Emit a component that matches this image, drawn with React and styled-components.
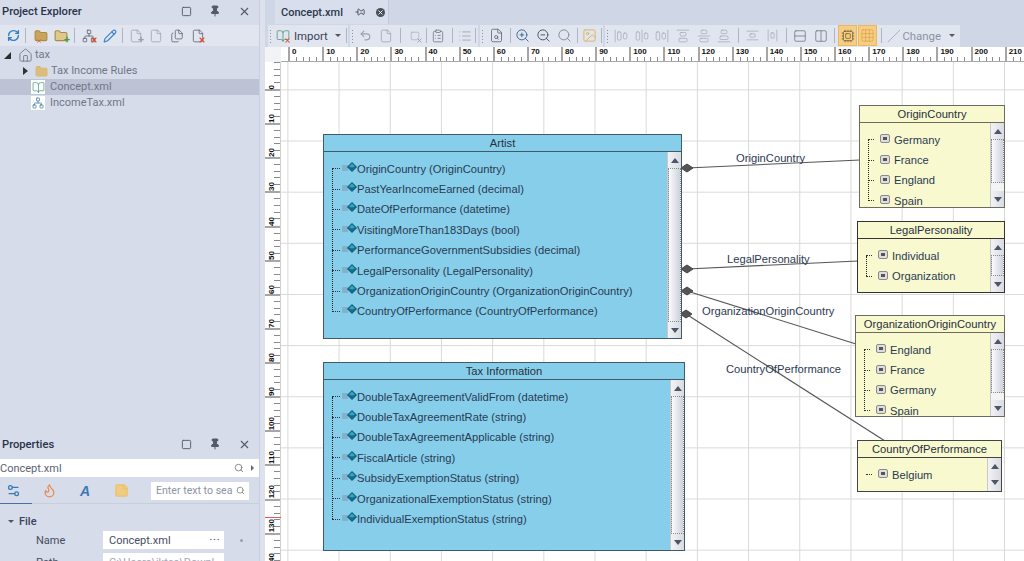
import React from "react";
import styled, { createGlobalStyle } from "styled-components";
import {
  RefreshCw, Folder, Network, Pencil, File, Files, Home, BookOpen,
  Undo2, Search, ZoomIn, ZoomOut, Image, List, Square, Pin, X, Settings2, Flame, StickyNote,
  AlignHorizontalJustifyStart, AlignHorizontalJustifyCenter, AlignHorizontalJustifyEnd,
  AlignVerticalJustifyStart, AlignVerticalJustifyCenter, AlignVerticalJustifyEnd,
  AlignVerticalSpaceAround, AlignHorizontalSpaceAround, Rows2, Columns2, Grid3x3, FileSearch,
  ClipboardList, Slash, Cpu,
} from "lucide-react";

const GlobalStyle = createGlobalStyle`
  html, body { margin: 0; height: 100%; overflow: hidden; }
  body { font-family: Roboto, "Noto Sans", sans-serif; background: #d6dce9; }
  #root { height: 100%; }
`;

const Shell = styled.div`
  display: grid;
  grid-template-columns: 259px 6px 1fr;
  grid-template-rows: minmax(0, 1fr);
  height: 561px;
  overflow: hidden;
`;

const Side = styled.div`
  display: flex;
  flex-direction: column;
  background: #d6dce9;
  min-width: 0;
  min-height: 0;
`;

const Splitter = styled.div`
  background: #dde2ed;
  border-left: 1px solid #c9cfdf;
`;

const Panel = styled.section`
  display: flex;
  flex-direction: column;
  flex: ${(p) => (p.$grow ? 1 : "none")};
  height: ${(p) => (p.$grow ? "auto" : "129px")};
  min-height: 0;
  overflow: hidden;
`;

const PanelHead = styled.div`
  display: flex;
  align-items: center;
  height: ${(p) => p.$h}px;
  box-sizing: border-box;
  flex: none;
  padding: 0 7px 3px 2px;
  gap: 13px;
  color: #28324a;
  font-size: 11.2px;
  font-weight: 500;
`;

const PanelTitle = styled.div`
  flex: 1;
`;

const HeadButton = styled.span`
  display: flex;
  width: 16px;
  justify-content: center;
  color: #55596a;
`;

const SideToolbar = styled.div`
  display: flex;
  align-items: center;
  height: 21px;
  flex: none;
  padding-left: 6px;
  background: #e1e5ef;
`;

const Tool = styled.span`
  position: relative;
  display: flex;
  align-items: center;
  justify-content: center;
  flex: none;
  width: ${(p) => p.$w || 20}px;
  height: 20px;
  color: ${(p) => p.$color || "#9aa0ad"};
`;

const ToolBadge = styled.span`
  position: absolute;
  right: ${(p) => p.$r ?? 1}px;
  bottom: 2px;
  display: flex;
  color: ${(p) => p.$color};
`;

const Sep = styled.span`
  flex: none;
  width: 1px;
  height: 15px;
  margin: 0 ${(p) => p.$m ?? 3}px;
  background: #aeb4c2;
`;

const Tree = styled.div`
  display: flex;
  flex-direction: column;
  padding-top: 1px;
`;

const TreeRow = styled.div`
  display: flex;
  align-items: center;
  height: 16px;
  box-sizing: border-box;
  gap: 3px;
  padding-left: ${(p) => p.$indent}px;
  background: ${(p) => (p.$selected ? "#bdc3d5" : "transparent")};
  color: #70778a;
  font-size: 11px;
`;

const TreeText = styled.span`
  margin-left: ${(p) => p.$l}px;
  margin-top: -2px;
`;

const Expander = styled.span`
  flex: none;
  width: 0;
  height: 0;
  margin-right: 4px;
  border-style: solid;
  border-width: ${(p) => (p.$open ? "0 0 7px 7px" : "4px 0 4px 5px")};
  border-color: ${(p) =>
    p.$open ? "transparent transparent #2d2d2d transparent" : "transparent transparent transparent #333"};
`;

const FileBadge = styled.span`
  display: flex;
  align-items: center;
  justify-content: center;
  width: 14px;
  height: 14px;
  margin-right: 2px;
  background: #fff;
  color: ${(p) => p.$color};
`;

const PathBar = styled.div`
  display: flex;
  align-items: center;
  flex: none;
  height: 18px;
  padding-right: 5px;
  background: #fff;
  color: #5b6274;
  font-size: 11px;
  gap: 7px;
`;

const PathText = styled.span`
  flex: 1;
`;

const SmallCaret = styled.span`
  width: 0;
  height: 0;
  border-style: solid;
  border-width: 3px 0 3px 3px;
  border-color: transparent transparent transparent #666;
`;

const PropTabs = styled.div`
  display: flex;
  align-items: center;
  flex: none;
  height: 25px;
  margin-top: 1px;
  border-bottom: 1px solid #c8cedd;
  position: relative;
  padding-left: 4px;
  gap: 18px;

  &::after {
    content: "";
    position: absolute;
    left: 0;
    bottom: -1px;
    width: 32px;
    height: 1px;
    background: #4a6fa5;
  }
`;

const SearchBox = styled.div`
  display: flex;
  align-items: center;
  justify-content: space-between;
  width: 98px;
  height: 18px;
  box-sizing: border-box;
  margin-left: 3px;
  padding: 0 4px 0 5px;
  background: #fff;
  color: #8d93a3;
  font-size: 10.6px;
  white-space: nowrap;
`;

const Section = styled.div`
  display: flex;
  align-items: center;
  height: 18px;
  margin-top: 11px;
  padding-left: 8px;
  gap: 5px;
  color: #3a425a;
  font-size: 11px;
  font-weight: 500;
`;

const DownCaret = styled.span`
  width: 0;
  height: 0;
  border-style: solid;
  border-width: 3px 3px 0 3px;
  border-color: #555 transparent transparent transparent;
`;

const PropRow = styled.div`
  display: flex;
  align-items: center;
  height: 18px;
  margin-top: ${(p) => p.$mt}px;
  padding-left: 36px;
  color: #454c63;
  font-size: 11px;
`;

const PropName = styled.span`
  width: 67px;
  flex: none;
`;

const PropValue = styled.div`
  display: flex;
  align-items: center;
  justify-content: space-between;
  width: 121px;
  height: 18px;
  padding: 0 4px 0 6px;
  box-sizing: border-box;
  background: #fff;
  color: ${(p) => p.$color};
  white-space: nowrap;
  overflow: hidden;
`;

const Bullet = styled.span`
  width: 3px;
  height: 3px;
  margin-left: 16px;
  border-radius: 50%;
  background: #9aa0ad;
`;

const Doc = styled.div`
  display: flex;
  flex-direction: column;
  min-width: 0;
  min-height: 0;
  background: #cfd6e6;
`;

const TabStrip = styled.div`
  display: flex;
  flex: none;
  height: 24px;
  padding-left: 10px;
`;

const DocTab = styled.div`
  display: flex;
  align-items: center;
  width: 114px;
  box-sizing: border-box;
  padding-left: 6px;
  background: #d8deeb;
  border-right: 1px solid #c3cadb;
  color: #2d364d;
  font-size: 11px;
  font-weight: 500;
`;

const TabPin = styled.span`
  display: flex;
  margin-left: 12px;
  color: #3c4254;
`;

const TabClose = styled.span`
  display: flex;
  align-items: center;
  justify-content: center;
  width: 9px;
  height: 9px;
  margin-left: 11px;
  border-radius: 50%;
  background: #4b4f5c;
  color: #fff;
`;

const DocToolbar = styled.div`
  display: flex;
  align-items: center;
  flex: none;
  height: 23px;
  padding-left: 3px;
  gap: 2px;
`;

const Segment = styled.div`
  display: flex;
  align-items: center;
  height: 22px;
  background: #e1e5ef;
`;

const Grip = styled.span`
  flex: none;
  width: 6px;
  height: 14px;
  background: radial-gradient(circle, #8a90a0 0.8px, transparent 1px) 1px 0 / 3px 3px repeat-y;
`;

const ImportLabel = styled.span`
  color: #3a4258;
  font-size: 11.4px;
  margin-left: 2px;
`;

const ChangeLabel = styled.span`
  color: #8d93a3;
  font-size: 11.4px;
`;

const Caret = styled(DownCaret)`
  margin: 0 ${(p) => p.$m}px 0 ${(p) => p.$l}px;
`;

const ActiveTool = styled(Tool)`
  width: 19px;
  height: 21px;
  margin-right: 1px;
  background: #f6cd83;
  border: 1px solid #eab95e;
  box-sizing: border-box;
  color: ${(p) => p.$color};
`;

const Designer = styled.div`
  display: grid;
  flex: 1;
  min-height: 0;
  grid-template-columns: 16px minmax(0, 1fr);
  grid-template-rows: 15px minmax(0, 1fr);
  background: #fff;
`;

const Corner = styled.div`
  background: #f2f3f6;
`;

const TopRuler = styled.div`
  display: flex;
  overflow: hidden;
  padding-left: 7px;
  background: #fff;
  border-bottom: 1px solid #a9a9a9;
`;

const TopCell = styled.div`
  flex: none;
  width: 34.13px;
  box-sizing: border-box;
  padding-left: 2px;
  border-left: 2px solid #a6a6a6;
  color: #111;
  font: 700 8px/9px "Liberation Sans", sans-serif;
  background: repeating-linear-gradient(90deg, transparent 0 5.8px, #8a8a8a 5.8px 6.8px) left bottom / 100% 4px no-repeat;
`;

const LeftRuler = styled.div`
  display: flex;
  flex-direction: column;
  min-height: 0;
  overflow: hidden;
  background: #fff;
  border-right: 1px solid #cfcfcf;
`;

const LeftCell = styled.div`
  display: flex;
  align-items: flex-end;
  flex: none;
  height: ${(p) => p.$h}px;
  box-sizing: border-box;
  padding-left: 2px;
  border-bottom: 2px solid #a6a6a6;
  background: repeating-linear-gradient(0deg, transparent 0 5.8px, #8a8a8a 5.8px 6.8px) right bottom / 6px 100% no-repeat;
`;

const LeftLabel = styled.span`
  writing-mode: vertical-rl;
  transform: rotate(180deg);
  color: #111;
  font: 700 8px/9px "Liberation Sans", sans-serif;
`;

const Canvas = styled.div`
  position: relative;
  overflow: hidden;
  background-color: #fff;
  background-image:
    linear-gradient(90deg, #d9d9d9 1.4px, transparent 1.4px),
    linear-gradient(0deg, transparent calc(100% - 1.4px), #d9d9d9 calc(100% - 1.4px));
  background-size: 51.2px 51.15px;
  background-position: 6.4px 27.4px;
`;

const Wires = styled.svg`
  position: absolute;
  inset: 0;
`;

const WireLabel = styled.span`
  position: absolute;
  left: ${(p) => p.$x}px;
  top: ${(p) => p.$y}px;
  color: #2c3a52;
  font: 11.2px/14px "Liberation Sans", Arial, sans-serif;
  white-space: nowrap;
`;

const Node = styled.div`
  position: absolute;
  left: ${(p) => p.$x}px;
  top: ${(p) => p.$y}px;
  width: ${(p) => p.$w}px;
  height: ${(p) => p.$h}px;
  display: flex;
  flex-direction: column;
  box-sizing: border-box;
  overflow: hidden;
  border: 1.5px solid ${(p) => p.$edge};
  background: ${(p) => p.$fill};
  font: 11.2px/14px "Liberation Sans", Arial, sans-serif;
  color: #2a3a50;
`;

const NodeTitle = styled.div`
  flex: none;
  height: 16px;
  line-height: 16px;
  text-align: center;
  border-bottom: 1.5px solid ${(p) => p.$edge};
  color: #27303c;
  white-space: nowrap;
`;

const NodeBody = styled.div`
  display: flex;
  flex: 1;
  min-height: 0;
`;

const NodeList = styled.div`
  position: relative;
  flex: 1;
  min-width: 0;
  padding-top: 6.5px;
`;

const TreeLine = styled.span`
  position: absolute;
  left: ${(p) => p.$x}px;
  top: 17px;
  height: ${(p) => (p.$rows - 1) * 20.4}px;
  border-left: 1px dotted #222;
`;

const NodeRow = styled.div`
  display: flex;
  align-items: center;
  height: 20.4px;
  padding-left: ${(p) => p.$x}px;
  white-space: nowrap;
`;

const Stub = styled.span`
  flex: none;
  width: ${(p) => p.$w}px;
  border-top: 1px dotted #333;
`;

const ValueIcon = styled.span`
  display: flex;
  align-items: center;
  justify-content: center;
  flex: none;
  width: 10px;
  height: 9px;
  margin: -2px 4px 0 6px;
  box-sizing: border-box;
  border: 1px solid #8a8a8a;
  border-radius: 2px;
  background: #dedede;

  &::after {
    content: "";
    width: 4px;
    height: 3px;
    background: #555;
  }
`;

const Scroll = styled.div`
  display: flex;
  flex-direction: column;
  flex: none;
  width: 13px;
  background: #f4f4f4;
  border-left: 1px solid #c9c9c9;
`;

const ScrollButton = styled.div`
  display: flex;
  align-items: center;
  justify-content: center;
  flex: ${(p) => (p.$fill ? 1 : "none")};
  height: ${(p) => (p.$fill ? "auto" : "16px")};
  background: linear-gradient(90deg, #f3f3f5, #d9dbe2);
`;

const Arrow = styled.span`
  width: 0;
  height: 0;
  border-left: 4px solid transparent;
  border-right: 4px solid transparent;
  ${(p) => (p.$up ? "border-bottom: 5px solid #4d5666;" : "border-top: 5px solid #4d5666;")}
`;

const ScrollTrack = styled.div`
  flex: 1;
  min-height: 0;
`;

const ScrollThumb = styled.div`
  height: ${(p) => p.$h};
  box-sizing: border-box;
  border: 1px dotted #8a8a8a;
  background: linear-gradient(90deg, #fbfbfd, #cfd2dc);
`;

const Marker = styled.span`
  position: absolute;
  left: 265px;
  top: 517px;
  width: 16px;
  height: 1px;
  background: #e25b5b;
`;

const topMarks = Array.from({ length: 22 }, (_, i) => i * 10);
const leftMarks = Array.from({ length: 15 }, (_, i) => i * 10);

const artistRows = [
  "OriginCountry (OriginCountry)",
  "PastYearIncomeEarned (decimal)",
  "DateOfPerformance (datetime)",
  "VisitingMoreThan183Days (bool)",
  "PerformanceGovernmentSubsidies (decimal)",
  "LegalPersonality (LegalPersonality)",
  "OrganizationOriginCountry (OrganizationOriginCountry)",
  "CountryOfPerformance (CountryOfPerformance)",
];

const taxRows = [
  "DoubleTaxAgreementValidFrom (datetime)",
  "DoubleTaxAgreementRate (string)",
  "DoubleTaxAgreementApplicable (string)",
  "FiscalArticle (string)",
  "SubsidyExemptionStatus (string)",
  "OrganizationalExemptionStatus (string)",
  "IndividualExemptionStatus (string)",
];

const lookups = [
  { title: "OriginCountry", x: 578, y: 43, w: 146, h: 103, thumb: "44px", edge: "#6b6b60", rows: ["Germany", "France", "England", "Spain"], line: 8 },
  { title: "LegalPersonality", x: 576, y: 159, w: 148, h: 72, thumb: "100%", edge: "#333", rows: ["Individual", "Organization"], line: 8 },
  { title: "OrganizationOriginCountry", x: 574, y: 253, w: 150, h: 102, thumb: "44px", edge: "#6b6b60", rows: ["England", "France", "Germany", "Spain"], line: 8 },
  { title: "CountryOfPerformance", x: 576, y: 378, w: 145, h: 52, edge: "#444", rows: ["Belgium"], line: 8 },
];

const links = [
  { label: "OriginCountry", lx: 455, ly: 89, from: [406, 106], to: [579, 98] },
  { label: "LegalPersonality", lx: 446, ly: 190, from: [406, 207], to: [577, 199] },
  { label: "OrganizationOriginCountry", lx: 421, ly: 242, from: [406, 229], to: [575, 282] },
  { label: "CountryOfPerformance", lx: 445, ly: 300, from: [405, 252], to: [604, 379] },
];

function EntityIcon() {
  return (
    <svg width="15" height="11" viewBox="0 0 15 11" style={{ flex: "none", margin: "-3px 0 0 2px" }}>
      <path d="M0 4h6M0 6h6M0 8h6" stroke="#7d97a8" strokeWidth="1" />
      <path d="M10 0.5 14.5 5 10 9.5 5.5 5Z" fill="#0f6f93" stroke="#0e3f55" strokeWidth="0.8" />
      <path d="M10 1.5 13 4.6 10 5.4 7 4.6Z" fill="#2fa6c4" />
    </svg>
  );
}

function Scrollbar({ thumb }) {
  return (
    <Scroll>
      <ScrollButton $fill={!thumb}><Arrow $up /></ScrollButton>
      {thumb && (
        <ScrollTrack>
          <ScrollThumb $h={thumb} />
        </ScrollTrack>
      )}
      <ScrollButton $fill={!thumb}><Arrow /></ScrollButton>
    </Scroll>
  );
}

function Diamond({ at }) {
  const [x, y] = at;
  return <path d={`M${x - 6} ${y}L${x} ${y - 4}L${x + 6} ${y}L${x} ${y + 4}Z`} fill="#555" stroke="#444" />;
}

function EntityNode({ title, rows, x, y, w, h }) {
  return (
    <Node $x={x} $y={y} $w={w} $h={h} $edge="#3f5b6b" $fill="#87ceeb">
      <NodeTitle $edge="#3f5b6b">{title}</NodeTitle>
      <NodeBody>
        <NodeList>
          <TreeLine $x={8} $rows={rows.length} />
          {rows.map((r) => (
            <NodeRow key={r} $x={8}>
              <Stub $w={8} />
              <EntityIcon />
              {r}
            </NodeRow>
          ))}
        </NodeList>
        <Scrollbar thumb="100%" />
      </NodeBody>
    </Node>
  );
}

function LookupNode({ title, rows, x, y, w, h, thumb, edge, line }) {
  return (
    <Node $x={x} $y={y} $w={w} $h={h} $edge={edge} $fill="#f9f9d0">
      <NodeTitle $edge={edge}>{title}</NodeTitle>
      <NodeBody>
        <NodeList>
          {rows.length > 1 && <TreeLine $x={line} $rows={rows.length} />}
          {rows.map((r) => (
            <NodeRow key={r} $x={line}>
              <Stub $w={6} />
              <ValueIcon />
              {r}
            </NodeRow>
          ))}
        </NodeList>
        <Scrollbar thumb={thumb} />
      </NodeBody>
    </Node>
  );
}

function PanelButtons() {
  return (
    <>
      <HeadButton><Square size={11} /></HeadButton>
      <HeadButton><Pin size={12} fill="#55596a" /></HeadButton>
      <HeadButton><X size={13} /></HeadButton>
    </>
  );
}

function AlignTools() {
  const icons = [
    AlignHorizontalJustifyStart, AlignHorizontalJustifyCenter, AlignHorizontalJustifyEnd,
    AlignVerticalJustifyStart, AlignVerticalJustifyCenter, AlignVerticalJustifyEnd,
  ];
  return icons.map((Icon, i) => (
    <Tool key={i} $w={20.6}><Icon size={14} strokeWidth={1.1} /></Tool>
  ));
}

export default function App() {
  return (
    <>
      <GlobalStyle />
      <Shell>
        <Side>
          <Panel $grow>
            <PanelHead $h={25}>
              <PanelTitle>Project Explorer</PanelTitle>
              <PanelButtons />
            </PanelHead>
            <SideToolbar>
              <Tool $w={14} $color="#2d7fc1"><RefreshCw size={13} strokeWidth={2.6} /></Tool>
              <Sep $m={5} />
              <Tool $color="#b08a45">
                <Folder size={14} fill="#c9a45c" />
                <ToolBadge $color="#d9634a" $r={9}><X size={6} strokeWidth={3} /></ToolBadge>
              </Tool>
              <Tool $color="#a88d4c">
                <Folder size={14} fill="#e0c78b" />
                <ToolBadge $color="#4d9a3a" $r={1}><span style={{ font: "700 11px/8px Roboto" }}>+</span></ToolBadge>
              </Tool>
              <Sep $m={3} />
              <Tool $w={22} $color="#5c6270">
                <Network size={14} strokeWidth={1.4} />
                <ToolBadge $color="#d9502f" $r={2}><X size={8} strokeWidth={3.5} /></ToolBadge>
              </Tool>
              <Tool $color="#3f86c6"><Pencil size={14} /></Tool>
              <Sep $m={2} />
              <Tool $w={21}>
                <File size={14} strokeWidth={1.3} />
                <ToolBadge $color="#9aa0ad" $r={2}><span style={{ font: "700 11px/8px Roboto" }}>+</span></ToolBadge>
              </Tool>
              <Tool $w={20}><File size={14} strokeWidth={1.3} /></Tool>
              <Tool $w={21} $color="#555b68"><Files size={14} strokeWidth={1.3} /></Tool>
              <Tool $w={21} $color="#555b68">
                <File size={14} strokeWidth={1.3} />
                <ToolBadge $color="#d9502f" $r={2}><X size={8} strokeWidth={3.5} /></ToolBadge>
              </Tool>
            </SideToolbar>
            <Tree>
              <TreeRow $indent={4}>
                <Expander $open />
                <Home size={15} color="#6f7686" strokeWidth={1.4} />
                <TreeText $l={-1}>tax</TreeText>
              </TreeRow>
              <TreeRow $indent={23}>
                <Expander />
                <Folder size={13} color="#d9b875" fill="#dcbd7b" />
                <TreeText $l={0}>Tax Income Rules</TreeText>
              </TreeRow>
              <TreeRow $indent={31} $selected>
                <FileBadge $color="#4f9a78"><BookOpen size={13} strokeWidth={1.4} /></FileBadge>
                <TreeText $l={0}>Concept.xml</TreeText>
              </TreeRow>
              <TreeRow $indent={31}>
                <FileBadge $color="#4d7fa8"><Network size={12} strokeWidth={1.6} /></FileBadge>
                <TreeText $l={0}>IncomeTax.xml</TreeText>
              </TreeRow>
            </Tree>
          </Panel>
          <Panel>
            <PanelHead $h={27}>
              <PanelTitle>Properties</PanelTitle>
              <PanelButtons />
            </PanelHead>
            <PathBar>
              <PathText>Concept.xml</PathText>
              <Search size={10} color="#777" />
              <SmallCaret />
            </PathBar>
            <PropTabs>
              <Tool $w={18} $color="#3c78b5"><Settings2 size={15} /></Tool>
              <Tool $w={18} $color="#e98a4f"><Flame size={15} /></Tool>
              <Tool $w={18} $color="#3c78b5"><span style={{ font: "italic 700 14px 'Liberation Sans', sans-serif" }}>A</span></Tool>
              <Tool $w={18} $color="#ecc26b"><StickyNote size={15} fill="#f0cc82" /></Tool>
              <SearchBox>
                Enter text to sea
                <Search size={9} color="#777" />
              </SearchBox>
            </PropTabs>
            <Section>
              <DownCaret />
              File
            </Section>
            <PropRow $mt={3}>
              <PropName>Name</PropName>
              <PropValue $color="#454c63">
                Concept.xml
                <span>⋯</span>
              </PropValue>
              <Bullet />
            </PropRow>
            <PropRow $mt={4}>
              <PropName>Path</PropName>
              <PropValue $color="#a3a8b5">C:\Users\iktes\Downl</PropValue>
              <Bullet />
            </PropRow>
          </Panel>
        </Side>
        <Splitter />
        <Doc>
          <TabStrip>
            <DocTab>
              Concept.xml
              <TabPin><Pin size={10} style={{ transform: "rotate(90deg)" }} /></TabPin>
              <TabClose><X size={7} strokeWidth={3} /></TabClose>
            </DocTab>
          </TabStrip>
          <DocToolbar>
            <Segment>
              <Grip />
              <Tool $w={18} $color="#4f9a78">
                <BookOpen size={14} strokeWidth={1.4} />
                <ToolBadge $color="#d9502f" $r={1}><X size={7} strokeWidth={3.5} /></ToolBadge>
              </Tool>
              <ImportLabel>Import</ImportLabel>
              <Caret $l={7} $m={4} />
              <Sep $m={1} />
            </Segment>
            <Segment>
              <Grip />
              <Tool><Undo2 size={13} /></Tool>
              <Tool><File size={14} strokeWidth={1.3} /></Tool>
              <Sep $m={4} />
              <Tool>
                <Square size={10} strokeWidth={1.3} />
                <ToolBadge $color="#9aa0ad" $r={2}><X size={7} strokeWidth={3} /></ToolBadge>
              </Tool>
              <Sep $m={1} />
              <Tool $color="#6b7280"><ClipboardList size={14} strokeWidth={1.3} /></Tool>
              <Sep $m={4} />
              <Tool $w={16}><List size={14} strokeWidth={1.4} /></Tool>
              <Sep $m={2} />
            </Segment>
            <Segment>
              <Grip />
              <Tool $w={22} $color="#5c6270"><FileSearch size={15} strokeWidth={1.3} /></Tool>
              <Sep $m={2} />
              <Tool $color="#3e6c98"><ZoomIn size={15} strokeWidth={1.6} /></Tool>
              <Tool $w={21} $color="#4d5a6b"><ZoomOut size={15} strokeWidth={1.6} /></Tool>
              <Tool $w={21} $color="#8a8f99"><Search size={15} strokeWidth={1.6} /></Tool>
              <Sep $m={2} />
              <Tool $color="#e0b45e"><Image size={15} strokeWidth={1.6} /></Tool>
              <Sep $m={1} />
            </Segment>
            <Segment>
              <Grip />
              <AlignTools />
              <Sep $m={3.5} />
              <Tool><AlignVerticalSpaceAround size={13} strokeWidth={1.2} /></Tool>
              <Tool><AlignHorizontalSpaceAround size={13} strokeWidth={1.2} /></Tool>
              <Sep $m={3.5} />
              <Tool $color="#6b7280"><Rows2 size={14} strokeWidth={1.3} /></Tool>
              <Tool $w={21} $color="#6b7280"><Columns2 size={14} strokeWidth={1.3} /></Tool>
              <Sep $m={3} />
              <ActiveTool $color="#6a5a35"><Cpu size={14} strokeWidth={1.3} /></ActiveTool>
              <ActiveTool $color="#d69f42"><Grid3x3 size={15} strokeWidth={1} /></ActiveTool>
              <Sep $m={3} />
              <Tool $w={17}><Slash size={14} strokeWidth={1.3} /></Tool>
              <ChangeLabel>Change</ChangeLabel>
              <Caret $l={8} $m={5} />
            </Segment>
          </DocToolbar>
          <Designer>
            <Corner />
            <TopRuler>
              {topMarks.map((m) => (
                <TopCell key={m}>{m}</TopCell>
              ))}
            </TopRuler>
            <LeftRuler>
              {leftMarks.map((m, i) => (
                <LeftCell key={m} $h={i === 0 ? 29 : 34.13}>
                  <LeftLabel>{m}</LeftLabel>
                </LeftCell>
              ))}
            </LeftRuler>
            <Canvas>
              <Wires width="743" height="499">
                {links.map((l) => (
                  <g key={l.label}>
                    <line x1={l.from[0]} y1={l.from[1]} x2={l.to[0]} y2={l.to[1]} stroke="#555" strokeWidth="1.1" />
                    <Diamond at={l.from} />
                  </g>
                ))}
              </Wires>
              {links.map((l) => (
                <WireLabel key={l.label} $x={l.lx} $y={l.ly}>{l.label}</WireLabel>
              ))}
              <EntityNode title="Artist" rows={artistRows} x={42} y={72} w={359} h={205} />
              <EntityNode title="Tax Information" rows={taxRows} x={42} y={300} w={362} h={189} />
              {lookups.map((n) => (
                <LookupNode key={n.title} {...n} />
              ))}
            </Canvas>
          </Designer>
        </Doc>
      </Shell>
      <Marker />
    </>
  );
}
